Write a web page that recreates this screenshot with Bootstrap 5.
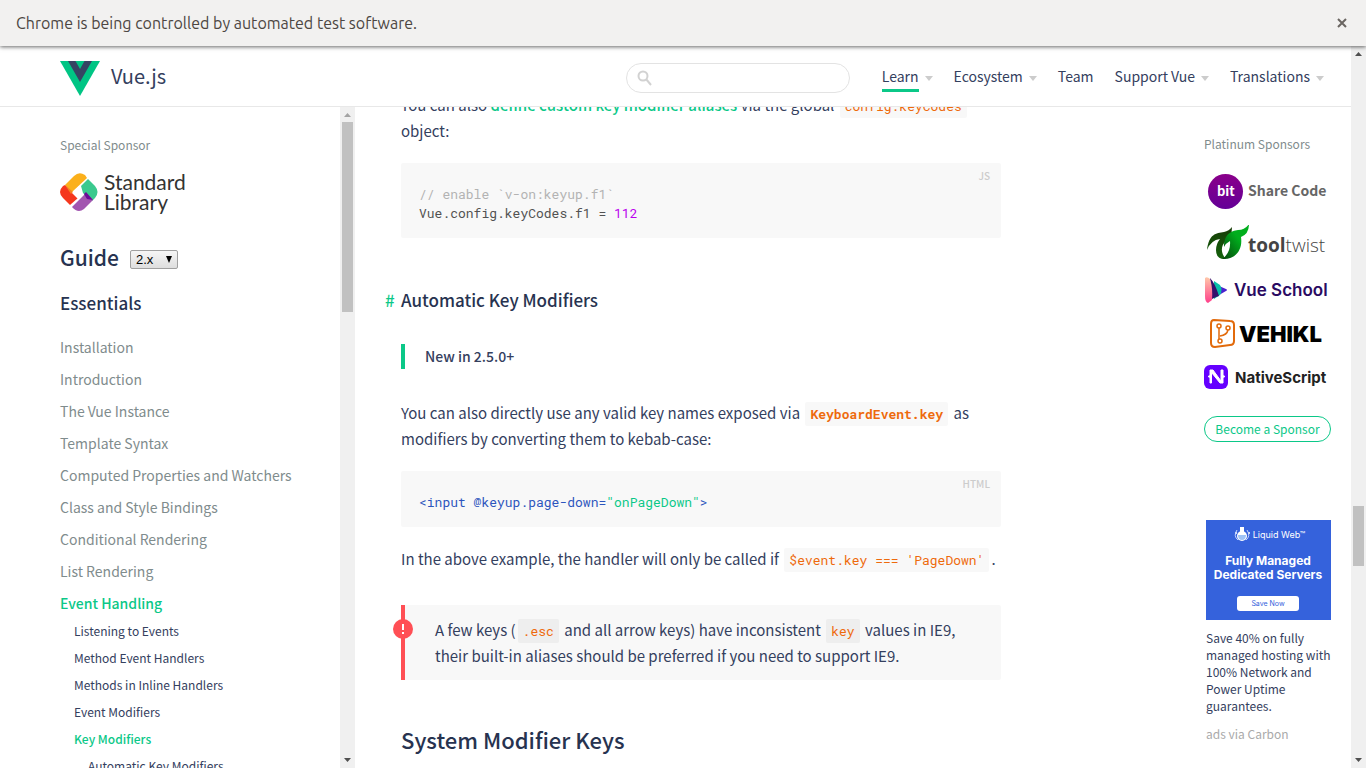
<!DOCTYPE html>
<html lang="en">
<head>
<meta charset="utf-8">
<meta name="viewport" content="width=device-width, initial-scale=1">
<title>Event Handling — Vue.js</title>
<link href="https://cdn.jsdelivr.net/npm/bootstrap@5.3.0/dist/css/bootstrap.min.css" rel="stylesheet">
<style>
:root { --green: #0bc888; --ink: #34405e; --dark: #273350; --mute: #7f8c8d; --code-bg: #f8f8f8; --accent: #ee6a0c; }
body { font-family: "Source Sans Pro", "Noto Sans CJK SC", sans-serif; font-size: 14px; line-height: 26px; color: var(--ink); background: #fff; }
a { color: inherit; text-decoration: none; }
code, pre { font-family: "Roboto Mono", "Liberation Mono", monospace; }
.infobar { height: 46px; background: #f2f1f0; color: #4c4642; font: 16px/20px Ubuntu, "Noto Sans", sans-serif; box-shadow: 0 1px 4px rgba(0,0,0,.6); }
.site-head { height: 61px; padding: 4px 27px 0 60px; border-bottom: 1px solid #e8e8e8; }
.brand-name { font-size: 20px; line-height: 28px; padding: 0 0 4px 11px; }
.search-box { width: 224px; height: 30px; border: 1px solid #e3e3e3; border-radius: 15px; }
.search-box input { min-width: 0; }
.top-nav { gap: 21px; padding-bottom: 4px; }
.caret { width: 8px; height: 5px; fill: #ccc; margin-left: 6px; }
.here { padding-bottom: 3px; box-shadow: 0 3px 0 var(--green); }
.track { width: 15px; background: #f0f0f0; }
.track svg { width: 15px; height: 15px; fill: #505050; flex-shrink: 0; }
.thumb { width: 11px; background: #c1c1c1; flex-shrink: 0; }
.side { width: 355px; }
.side-body { padding: 25px 20px 0 60px; min-width: 0; }
.label { font-size: 12px; color: var(--mute); }
.special { margin-top: 15px; }
.side h2 { font-size: 21px; line-height: 30px; font-weight: 500; color: var(--dark); margin: 25px 0 0; }
.side h3 { font-size: 17px; line-height: 26px; font-weight: 500; color: var(--dark); margin: 18px 0 15px; }
.side select { appearance: none; width: 48px; height: 19px; font: 13px "Liberation Sans", sans-serif; padding: 0 0 0 5px; margin: 33px 0 0 11px; color: #000; background: url("data:image/svg+xml,%3Csvg xmlns='http://www.w3.org/2000/svg' width='6' height='7'%3E%3Cpath d='M0 0h6L3 7z'/%3E%3C/svg%3E") no-repeat right 5px center, linear-gradient(#f6f6f6, #dedede); border: 1px solid #a0a0a0; border-radius: 2px; }
.chapters { line-height: 32px; color: var(--mute); }
.chapters .now { color: var(--green); font-weight: 500; }
.sections { font-size: 12px; line-height: 27px; color: var(--ink); padding-left: 14px; }
.chapters > li > .sections { margin-top: -2px; }
.doc { max-width: 646px; padding-left: 46px; margin-top: -15px; font-size: 15px; }
.doc p { margin: 0 0 19px; }
.doc code { font-size: 13px; line-height: 20px; color: var(--accent); background: var(--code-bg); padding: 3px 5px; margin: 0 2px; border-radius: 2px; }
.define, .hash { color: var(--green); }
.hash { display: inline-block; width: 16px; }
.snippet { background: var(--code-bg); border-radius: 2px; padding: 22px 18px 15px; }
.snippet pre { font-size: 13px; line-height: 19px; color: #525252; }
.snippet .lang { top: 4px; right: 11px; font-size: 10px; line-height: 18px; color: #ccc; font-weight: 500; }
.tok-comment { color: #b3b3b3; }
.tok-number { color: #bb00ee; }
.tok-tag { color: #2d55bd; }
.tok-string { color: #0bc888; }
.doc h2 { font-size: 22px; line-height: 30px; font-weight: 500; color: var(--dark); margin-top: 44px; }
.doc h3 { font-size: 17px; line-height: 26px; font-weight: 500; color: var(--dark); margin: 49px 0 31px -16px; }
.doc blockquote { font-size: 14px; border-left: 4px solid var(--green); padding-left: 20px; margin: 0 0 31px; line-height: 25px; font-weight: 500; }
.doc .after-code { margin: 19px 0 33px; }
.doc .tip { background: var(--code-bg); border-left: 4px solid #ff4f55; border-radius: 0 2px 2px 0; padding: 12px 24px 11px 30px; }
.doc .tip code { background: #eee; }
.bang { width: 20px; height: 20px; left: -12px; top: 14px; }
.sponsors { width: 147px; padding-top: 24px; }
.sponsors svg { display: block; width: 127px; }
.logos { gap: 15px; padding: 17px 0 26px; }
.join { width: 127px; height: 26px; border: 1px solid var(--green); border-radius: 13px; color: var(--green); font-size: 12px; line-height: 23px; text-align: center; }
.carbon { font-size: 12px; line-height: 17px; width: 125px; margin: 78px 0 0 2px; }
.sponsors .carbon svg { width: 125px; margin-bottom: 9px; }
.by { color: #aaa; margin-top: 11px; }
</style>
</head>
<body>
<div class="vh-100 d-flex flex-column overflow-hidden">
  <div class="infobar d-flex align-items-center justify-content-between flex-shrink-0 px-3 position-relative z-1">
    <span>Chrome is being controlled by automated test software.</span>
    <button class="btn p-0 border-0 d-flex" aria-label="Close"><svg width="16" height="16"><path d="M4 4l8 8M12 4l-8 8" stroke="#6b6662" stroke-width="2"/></svg></button>
  </div>
  <div class="d-flex flex-grow-1 overflow-hidden">
    <div class="d-flex flex-column flex-grow-1 overflow-hidden">
      <header class="site-head d-flex align-items-center justify-content-between flex-shrink-0 bg-white">
        <a href="#" class="d-flex align-items-center">
          <svg width="40" height="36" viewBox="0 0 40 36"><path d="M0 1h40L20 36z" fill="#00c584"/><path d="M8 1h7.500L20 9 24.500 1H32L20 22z" fill="#364463"/></svg>
          <span class="brand-name">Vue.js</span>
        </a>
        <div class="d-flex align-items-center">
          <label class="search-box d-flex align-items-center px-2 me-4">
            <svg class="flex-shrink-0" width="18" height="16" fill="none" stroke="#d2d2d2" stroke-width="2"><circle cx="8" cy="6" r="4.500"/><path d="M11 9l5 6"/></svg>
            <input type="search" class="border-0 bg-transparent flex-grow-1" aria-label="Search">
          </label>
          <nav class="top-nav d-flex ms-2">
            <a href="#"><span class="here">Learn</span><svg class="caret"><path d="M0 0h8L4 5z"/></svg></a>
            <a href="#">Ecosystem<svg class="caret"><path d="M0 0h8L4 5z"/></svg></a>
            <a href="#">Team</a>
            <a href="#">Support Vue<svg class="caret"><path d="M0 0h8L4 5z"/></svg></a>
            <a href="#">Translations<svg class="caret"><path d="M0 0h8L4 5z"/></svg></a>
          </nav>
        </div>
      </header>
      <div class="d-flex flex-grow-1 overflow-hidden">
        <aside class="side d-flex flex-shrink-0">
          <div class="side-body flex-grow-1 overflow-hidden">
            <div class="label">Special Sponsor</div>
            <a href="#" class="d-block special">
              <svg class="d-block" width="128" height="44" viewBox="0 0 128 44"><path d="M5 12L14 3Q19-2 25 2L27 5 12 19z" fill="#fbb01b"/><path d="M5 12L18 25 10 32 3 25Q-3 19 3 13z" fill="#f5371d"/><path d="M5 12l8 7-2 2z" fill="#f58220"/><path d="M12 20l7-7 7 7-7 7z" fill="#fff"/><path d="M21 13l7-7 7 7Q40 19 35 25l-3 3-4-3-5-5z" fill="#3bc98e"/><path d="M12 34l14-14 7 7-9 9q-6 5-12-2z" fill="#a255b0"/><path d="M24 21l2-2 7 8-6-1z" fill="#6c0a98"/><g font-family="Lato, sans-serif" font-size="21" fill="#333"><text x="44" y="17">Standard</text><text x="44" y="37">Library</text></g></svg>
            </a>
            <div class="d-flex align-items-start"><h2>Guide</h2><select aria-label="Version"><option>2.x</option></select></div>
            <h3>Essentials</h3>
            <ul class="chapters list-unstyled mb-0">
              <li><a href="#">Installation</a></li>
              <li><a href="#">Introduction</a></li>
              <li><a href="#">The Vue Instance</a></li>
              <li><a href="#">Template Syntax</a></li>
              <li><a href="#">Computed Properties and Watchers</a></li>
              <li><a href="#">Class and Style Bindings</a></li>
              <li><a href="#">Conditional Rendering</a></li>
              <li><a href="#">List Rendering</a></li>
              <li><a href="#" class="now">Event Handling</a>
                <ul class="sections list-unstyled">
                  <li><a href="#">Listening to Events</a></li>
                  <li><a href="#">Method Event Handlers</a></li>
                  <li><a href="#">Methods in Inline Handlers</a></li>
                  <li><a href="#">Event Modifiers</a></li>
                  <li><a href="#" class="now">Key Modifiers</a>
                    <ul class="sections list-unstyled"><li><a href="#">Automatic Key Modifiers</a></li></ul></li>
                </ul></li>
            </ul>
          </div>
          <div class="track d-flex flex-column align-items-center flex-shrink-0">
            <svg><path d="M4 10h7L7.500 6z" fill="#a3a3a3"/></svg>
            <div class="thumb" style="height:190px"></div>
            <svg class="mt-auto"><path d="M4 5h7L7.500 9z"/></svg>
          </div>
        </aside>
        <main class="flex-grow-1 overflow-hidden">
          <article class="doc">
            <p>You can also <a href="#" class="define" style="font-weight:500">define custom key modifier aliases</a> via the global <code>config.keyCodes</code> object:</p>
            <div class="snippet position-relative"><span class="lang position-absolute">JS</span><pre class="m-0"><span class="tok-comment">// enable `v-on:keyup.f1`</span>
Vue.config.keyCodes.f1 = <span class="tok-number">112</span></pre></div>
            <h3><a href="#" class="hash">#</a>Automatic Key Modifiers</h3>
            <blockquote>New in 2.5.0+</blockquote>
            <p>You can also directly use any valid key names exposed via <a href="#"><code class="fw-bold">KeyboardEvent.key</code></a> as modifiers by converting them to kebab-case:</p>
            <div class="snippet position-relative"><span class="lang position-absolute">HTML</span><pre class="m-0"><span class="tok-tag">&lt;input @keyup.page-down=<span class="tok-string">"onPageDown"</span>&gt;</span></pre></div>
            <p class="after-code">In the above example, the handler will only be called if <code>$event.key === 'PageDown'</code>.</p>
            <p class="tip position-relative"><svg class="bang position-absolute"><circle cx="10" cy="10" r="10" fill="#ff4f55"/><path d="M10 5v6M10 13v2" stroke="#fff" stroke-width="2"/></svg>A few keys (<code>.esc</code> and all arrow keys) have inconsistent <code>key</code> values in IE9, their built-in aliases should be preferred if you need to support IE9.</p>
            <h2>System Modifier Keys</h2>
          </article>
        </main>
        <aside class="sponsors flex-shrink-0">
          <div class="label">Platinum Sponsors</div>
          <div class="logos d-flex flex-column">
            <a href="#"><svg height="36"><defs><linearGradient id="gb" x2="0" y2="1"><stop stop-color="#8a008a"/><stop offset="1" stop-color="#640097"/></linearGradient></defs><circle cx="21.500" cy="17.500" r="17.500" fill="url(#gb)"/><text x="13" y="22" font-family="Noto Sans CJK SC, sans-serif" font-weight="700" font-size="13" fill="#fff">bit</text><text x="44" y="22" font-family="Noto Sans CJK SC, sans-serif" font-weight="700" font-size="14" fill="#666">Share Code</text></svg></a>
            <a href="#"><svg height="36"><defs><linearGradient id="gt" x2="0" y2="1"><stop stop-color="#173b06"/><stop offset="1" stop-color="#14620c"/></linearGradient><linearGradient id="gu" x1="1" x2="0" y2="1"><stop offset=".4" stop-color="#00ae1d"/><stop offset="1" stop-color="#06430b"/></linearGradient></defs><path d="M3 25C5 9 12 8 20 7Q25 6 28 2Q28 12 22 16C16 21 17 29 22 34Q12 35 12 25Q12 19 16 14Q7 15 3 25z" fill="url(#gt)"/><path d="M20 22C20 9 27 6 34 5Q41 5 45-1Q45 9 37 12C39 25 31 35 18 34Q27 28 26 16Q22 18 20 22z" fill="url(#gu)"/><text x="44" y="27" font-family="Open Sans, sans-serif" font-size="19" fill="#444"><tspan font-weight="700">tool</tspan><tspan font-weight="300">twist</tspan></text></svg></a>
            <a href="#"><svg height="28"><defs><linearGradient id="gv" x2="0" y2="1"><stop stop-color="#ffc9aa"/><stop offset="1" stop-color="#ff3e8a"/></linearGradient></defs><path d="M15 10l7 3q2 1 0 2l-7 4z" fill="#4b20cf"/><path d="M10 5l6 4q3 5 0 10l-6 4z" fill="#08bfa8"/><path d="M6 2q5 5 9 18l-3 1-4 2z" fill="#35106b"/><path d="M1 2Q3 0 6 3Q9 12 8 24L4 27Q1 26 1 20z" fill="url(#gv)"/><text x="30" y="20" font-family="Inter, sans-serif" font-weight="600" font-size="17" fill="#2a0a62">Vue School</text></svg></a>
            <a href="#"><svg height="30"><path d="M10 1L26 2Q30 2 30 6V22Q30 26 26 26L11 28Q7 28 7 24V5Q7 1 10 1z" fill="#fff" stroke="#e26a0b" stroke-width="2"/><g fill="none" stroke="#e26a0b" stroke-width="1.500"><circle cx="15" cy="7" r="2"/><circle cx="24" cy="9" r="2"/><circle cx="16" cy="22" r="2"/><path d="M15 9v11M24 11q-1 5-8 6"/></g><text x="35" y="23" font-family="Inter, sans-serif" font-weight="900" font-size="22" fill="#000">VEHIKL</text></svg></a>
            <a href="#"><svg height="26"><rect y="1" width="24" height="24" rx="6" fill="#6500ff"/><path d="M4 12.500l2-1V6h3l8 11V6h2v5.500l2 1-2 1V19h-3L7.500 8.500V19H6v-5.500z" fill="#fff" stroke="#fff"/><text x="31" y="19" font-family="Inter, sans-serif" font-weight="700" font-size="15" fill="#222">NativeScript</text></svg></a>
          </div>
          <a href="#" class="join d-block">Become a Sponsor</a>
          <div class="carbon">
            <a href="#"><svg height="100"><rect width="125" height="100" fill="#3562dc"/><g fill="#fff"><circle cx="36" cy="16" r="5"/><rect x="34" y="7" width="4" height="6"/><circle cx="30" cy="13" r="1"/><circle cx="43" cy="13" r="1"/><path d="M31 10q-4 6 1 10M41 10q4 6-1 10" fill="none" stroke="#c9d6ff"/></g><path d="M32 15h8q0 5-4 5t-4-5z" fill="#9fc3f5"/><g font-family="Inter, sans-serif" fill="#fff" text-anchor="middle"><text x="73" y="18" font-size="9">Liquid Web™</text><text x="62" y="45" font-size="12" font-weight="700">Fully Managed</text><text x="62" y="59" font-size="12" font-weight="700">Dedicated Servers</text><rect x="31" y="76" width="62" height="15" rx="3"/><text x="62" y="86" font-size="7" fill="#3562dc">Save Now</text></g></svg></a>
            <a href="#" class="d-block">Save 40% on fully managed hosting with 100% Network and Power Uptime guarantees.</a>
            <a href="#" class="by d-block">ads via Carbon</a>
          </div>
        </aside>
      </div>
    </div>
    <div class="track d-flex flex-column align-items-center flex-shrink-0">
      <svg><path d="M4 10h7L7.500 6z"/></svg>
      <div class="thumb" style="height:60px;margin-top:445px"></div>
      <svg class="mt-auto"><path d="M4 5h7L7.500 9z"/></svg>
    </div>
  </div>
</div>
<script src="https://cdn.jsdelivr.net/npm/bootstrap@5.3.0/dist/js/bootstrap.bundle.min.js"></script>
</body>
</html>
